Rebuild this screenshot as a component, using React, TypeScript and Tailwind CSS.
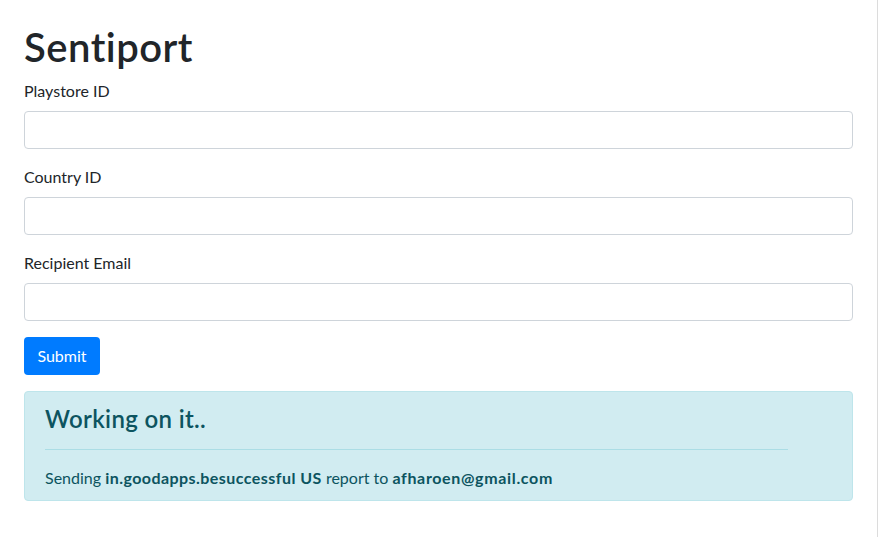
import React from 'react';

const font = { fontFamily: 'Lato, "Open Sans", sans-serif' };

function Field({ label, type = 'text' }: { label: string; type?: string }) {
  return (
    <div className="mb-4 flex flex-col">
      <label className="mb-2 text-[16px] leading-6 text-[#212529]">{label}</label>
      <input
        type={type}
        className="h-[38px] w-full rounded-[4px] border border-[#ced4da] bg-white px-3 text-[16px] outline-none"
      />
    </div>
  );
}

export default function App() {
  return (
    <div className="flex min-h-[537px] bg-white" style={font}>
      <div className="w-[878px] border-r border-[#dcdcdc] pt-[23px] px-6">
        <div className="w-[829px]">
          <h1 className="mb-2 text-[40px] font-semibold leading-[48px] tracking-[0.5px] text-[#212529]">Sentiport</h1>
          <form>
            <Field label="Playstore ID" />
            <Field label="Country ID" />
            <Field label="Recipient Email" type="email" />
            <button
              type="button"
              className="h-[38px] w-[76px] rounded-[4px] bg-[#007bff] text-[16px] text-white"
            >
              Submit
            </button>
          </form>
          <div className="mt-4 rounded-[4px] border border-[#bee5eb] bg-[#d1ecf1] px-5 pt-3 pb-[10px] text-[#0c5460]">
            <h4 className="text-[24px] font-semibold leading-[29px] tracking-[0.35px]">Working on it..</h4>
            <hr className="my-4 w-[743px] border-t border-[#abdde5]" />
            <p className="text-[16px] leading-6">
              Sending <b className="tracking-[0.45px]">in.goodapps.besuccessful US</b> report to{' '}
              <b className="tracking-[0.65px]">afharoen@gmail.com</b>
            </p>
          </div>
        </div>
      </div>
    </div>
  );
}
